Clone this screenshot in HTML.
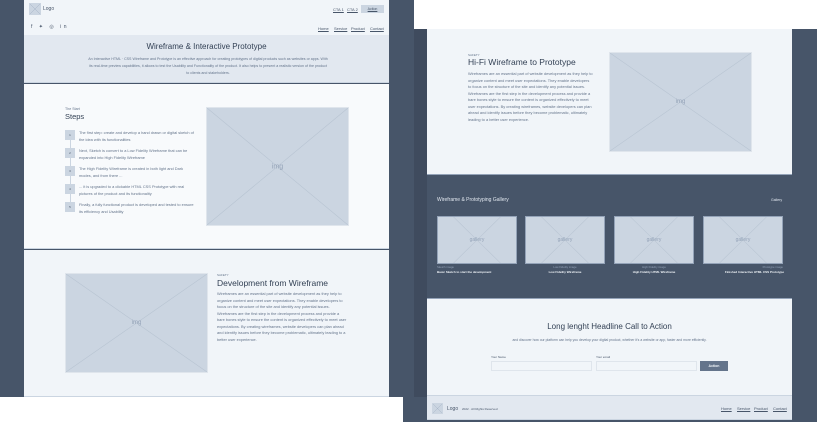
<!DOCTYPE html>
<html><head><meta charset="utf-8"><style>
*{margin:0;padding:0;box-sizing:border-box}
body{width:817px;height:422px;background:#475569;position:relative;overflow:hidden;font-family:"Liberation Sans",sans-serif;color:#475569}
.a{position:absolute}
.ph{position:absolute;background:#cbd5e1;border:1px solid #dfe5ec;overflow:hidden}
.ph svg{position:absolute;left:0;top:0;width:100%;height:100%}
.ph span{position:absolute;left:0;right:0;top:50%;transform:translateY(-50%);text-align:center;color:#94a3b8;background:transparent}
.t{position:absolute;white-space:nowrap}
.p{position:absolute;font-size:3.9px;line-height:6.5px;color:#64748b}
u{text-decoration:underline}
.nav{font-size:4px;color:#475569}
</style></head><body>
<!-- left panel -->
<div class="a" style="left:24px;top:0;width:365px;height:35px;background:#f1f5f9"></div>
<div class="a" style="left:24px;top:35px;width:365px;height:48px;background:#e2e8f0;border-bottom:1px solid #cbd5e1"></div>
<div class="a" style="left:24px;top:84px;width:365px;height:165px;background:#f8fafc;border-bottom:1px solid #cbd5e1"></div>
<div class="a" style="left:24px;top:250px;width:365px;height:147px;background:#f1f5f9;border-bottom:1px solid #cbd5e1"></div>
<div class="a" style="left:0;top:397px;width:403px;height:25px;background:#fff"></div>
<div class="a" style="left:403px;top:397px;width:11px;height:25px;background:#475569"></div>
<div class="ph" style="left:29px;top:3px;width:12px;height:12px;border-color:#cbd5e1"><svg viewBox="0 0 12 12" preserveAspectRatio="none"><path d="M0 0L12 12M12 0L0 12" stroke="#94a3b8" stroke-width=".4"/></svg></div>
<div class="t" style="left:43px;top:6px;font-size:5px">Logo</div>
<div class="t nav" style="left:333px;top:7px"><u>CTA 1</u></div>
<div class="t nav" style="left:347px;top:7px"><u>CTA 2</u></div>
<div class="a" style="left:361px;top:5px;width:23px;height:8px;background:#cbd5e1;font-size:3.5px;text-align:center;line-height:8px"><u>Action</u></div>
<div class="t" style="left:31px;top:24px;font-size:5px;color:#475569;letter-spacing:2.5px">f ✦ ◎ in</div>
<div class="t nav" style="left:318px;top:26px"><u>Home</u></div>
<div class="t nav" style="left:334px;top:26px"><u>Service</u></div>
<div class="t nav" style="left:351px;top:26px"><u>Product</u></div>
<div class="t nav" style="left:370px;top:26px"><u>Contact</u></div>
<div class="t" style="left:24px;width:365px;top:42px;text-align:center;font-size:8px;color:#334155">Wireframe &amp; Interactive Prototype</div>
<div class="p" style="left:88px;width:240px;top:56px;text-align:center;font-size:3.6px;line-height:7px">An Interactive HTML · CSS Wireframe and Prototype is an effective approach for creating prototypes of digital products such as websites or apps. With its real-time preview capabilities, it allows to test the Usability and Functionality of the product. It also helps to present a realistic version of the product to clients and stakeholders.</div>
<div class="t" style="left:65px;top:107px;font-size:3.6px;color:#64748b">The Start</div>
<div class="t" style="left:65px;top:112px;font-size:7.5px;color:#334155">Steps</div>
<div class="a" style="left:70px;top:135px;width:1px;height:72px;background:#cbd5e1"></div>
<div class="a" style="left:65px;top:130px;width:10px;height:10px;background:#cbd5e1;font-size:3px;text-align:center;line-height:10px">1</div>
<div class="a" style="left:65px;top:148px;width:10px;height:10px;background:#cbd5e1;font-size:3px;text-align:center;line-height:10px">2</div>
<div class="a" style="left:65px;top:166px;width:10px;height:10px;background:#cbd5e1;font-size:3px;text-align:center;line-height:10px">3</div>
<div class="a" style="left:65px;top:184px;width:10px;height:10px;background:#cbd5e1;font-size:3px;text-align:center;line-height:10px">4</div>
<div class="a" style="left:65px;top:202px;width:10px;height:10px;background:#cbd5e1;font-size:3px;text-align:center;line-height:10px">5</div>
<div class="p" style="left:79px;top:130px;width:117px">The first step: create and develop a hand drawn or digital sketch of the idea with its functionalities</div>
<div class="p" style="left:79px;top:148px;width:117px">Next, Sketch is convert to a Low Fidelity Wireframe that can be expanded into High Fidelity Wireframe</div>
<div class="p" style="left:79px;top:166px;width:117px">The High Fidelity Wireframe is created in both light and Dark modes, and from there ...</div>
<div class="p" style="left:79px;top:184px;width:117px">... it is upgraded to a clickable HTML CSS Prototype with real pictures of the product and its functionality</div>
<div class="p" style="left:79px;top:202px;width:117px">Finally, a fully functional product is developed and tested to ensure its efficiency and Usability</div>
<div class="ph" style="left:206px;top:107px;width:143px;height:119px"><svg viewBox="0 0 10 10" preserveAspectRatio="none"><path d="M0 0L10 10M10 0L0 10" stroke="#b8c4d2" stroke-width=".05"/></svg><span style="font-size:7px;background:none">img</span></div>
<div class="ph" style="left:65px;top:273px;width:143px;height:100px"><svg viewBox="0 0 10 10" preserveAspectRatio="none"><path d="M0 0L10 10M10 0L0 10" stroke="#b8c4d2" stroke-width=".05"/></svg><span style="font-size:6px">img</span></div>
<div class="t" style="left:217px;top:273px;font-size:3px;color:#64748b">SAFETY</div>
<div class="t" style="left:217px;top:278px;font-size:8.5px;color:#334155">Development from Wireframe</div>
<div class="p" style="left:217px;top:291px;width:130px">Wireframes are an essential part of website development as they help to organize content and meet user expectations. They enable developers to focus on the structure of the site and identify any potential issues. Wireframes are the first step in the development process and provide a bare bones style to ensure the content is organized effectively to meet user expectations. By creating wireframes, website developers can plan ahead and identify issues before they become problematic, ultimately leading to a better user experience.</div>

<!-- right side -->
<div class="a" style="left:414px;top:0;width:403px;height:29px;background:#fff"></div>
<div class="a" style="left:414px;top:29px;width:13px;height:368px;background:#3f4b5e"></div>
<div class="a" style="left:427px;top:29px;width:365px;height:146px;background:#f1f5f9;border-bottom:1px solid #94a3b8"></div>
<div class="a" style="left:427px;top:298px;width:365px;height:97px;background:#f1f5f9;border-top:1px solid #94a3b8"></div>
<div class="a" style="left:427px;top:395px;width:365px;height:25px;background:#e2e8f0;border-top:1px solid #cbd5e1;border-bottom:1px solid #cbd5e1"></div>
<div class="t" style="left:468px;top:53px;font-size:3px;color:#64748b">SAFETY</div>
<div class="t" style="left:468px;top:57px;font-size:8.5px;color:#334155">Hi-Fi Wireframe to Prototype</div>
<div class="p" style="left:468px;top:71px;width:125px">Wireframes are an essential part of website development as they help to organize content and meet user expectations. They enable developers to focus on the structure of the site and identify any potential issues. Wireframes are the first step in the development process and provide a bare bones style to ensure the content is organized effectively to meet user expectations. By creating wireframes, website developers can plan ahead and identify issues before they become problematic, ultimately leading to a better user experience.</div>
<div class="ph" style="left:609px;top:52px;width:143px;height:100px"><svg viewBox="0 0 10 10" preserveAspectRatio="none"><path d="M0 0L10 10M10 0L0 10" stroke="#b8c4d2" stroke-width=".05"/></svg><span style="font-size:6px">img</span></div>
<div class="t" style="left:437px;top:197px;font-size:5px;color:#e2e8f0">Wireframe &amp; Prototyping Gallery</div>
<div class="t" style="left:771px;top:198px;font-size:3.5px;color:#e2e8f0">Gallery</div>
<div class="ph" style="left:437px;top:216px;width:80px;height:48px;border-color:#94a3b8"><svg viewBox="0 0 10 10" preserveAspectRatio="none"><path d="M2 0L8 10M8 0L2 10" stroke="#b8c4d2" stroke-width=".08"/></svg><span style="font-size:5px">gallery</span></div>
<div class="ph" style="left:525px;top:216px;width:80px;height:48px;border-color:#94a3b8"><svg viewBox="0 0 10 10" preserveAspectRatio="none"><path d="M2 0L8 10M8 0L2 10" stroke="#b8c4d2" stroke-width=".08"/></svg><span style="font-size:5px">gallery</span></div>
<div class="ph" style="left:614px;top:216px;width:80px;height:48px;border-color:#94a3b8"><svg viewBox="0 0 10 10" preserveAspectRatio="none"><path d="M2 0L8 10M8 0L2 10" stroke="#b8c4d2" stroke-width=".08"/></svg><span style="font-size:5px">gallery</span></div>
<div class="ph" style="left:703px;top:216px;width:80px;height:48px;border-color:#94a3b8"><svg viewBox="0 0 10 10" preserveAspectRatio="none"><path d="M2 0L8 10M8 0L2 10" stroke="#b8c4d2" stroke-width=".08"/></svg><span style="font-size:5px">gallery</span></div>
<div class="t" style="left:437px;top:265px;font-size:2.8px;color:#94a3b8">Sketch image</div>
<div class="t" style="left:437px;top:270px;font-size:3px;color:#f1f5f9;font-weight:bold">Basic Sketch to start the development</div>
<div class="t" style="left:525px;width:80px;text-align:center;top:265px;font-size:2.8px;color:#94a3b8">Low Fidelity image</div>
<div class="t" style="left:525px;width:80px;text-align:center;top:270px;font-size:3px;color:#f1f5f9;font-weight:bold">Low Fidelity Wireframe</div>
<div class="t" style="left:614px;width:80px;text-align:center;top:265px;font-size:2.8px;color:#94a3b8">High Fidelity image</div>
<div class="t" style="left:614px;width:80px;text-align:center;top:270px;font-size:3px;color:#f1f5f9;font-weight:bold">High Fidelity HTML Wireframe</div>
<div class="t" style="left:703px;width:80px;text-align:right;top:265px;font-size:2.8px;color:#94a3b8">Prototype image</div>
<div class="t" style="left:703px;width:81px;text-align:right;top:270px;font-size:3px;color:#f1f5f9;font-weight:bold">Finished Interactive HTML CSS Prototype</div>
<div class="t" style="left:427px;width:365px;top:322px;text-align:center;font-size:8px;color:#334155">Long lenght Headline Call to Action</div>
<div class="t" style="left:427px;width:365px;top:338px;text-align:center;font-size:3.4px;color:#64748b">and discover how our platform can help you develop your digital product, whether it's a website or app, faster and more efficiently.</div>
<div class="t" style="left:491px;top:355px;font-size:3px;color:#475569">Your Name</div>
<div class="t" style="left:596px;top:355px;font-size:3px;color:#475569">Your email</div>
<div class="a" style="left:491px;top:361px;width:101px;height:10px;border:1px solid #dfe5ec;background:#f1f5f9"></div>
<div class="a" style="left:596px;top:361px;width:101px;height:10px;border:1px solid #dfe5ec;background:#f1f5f9"></div>
<div class="a" style="left:700px;top:361px;width:28px;height:10px;background:#64748b;color:#f1f5f9;font-size:3.5px;text-align:center;line-height:10px;font-weight:bold">Action</div>
<div class="ph" style="left:432px;top:403px;width:11px;height:11px;border-color:#cbd5e1"><svg viewBox="0 0 12 12" preserveAspectRatio="none"><path d="M0 0L12 12M12 0L0 12" stroke="#94a3b8" stroke-width=".4"/></svg></div>
<div class="t" style="left:447px;top:406px;font-size:5px">Logo</div>
<div class="t" style="left:462px;top:407px;font-size:3px;color:#475569">2022 · All Rights Reserved</div>
<div class="t nav" style="left:721px;top:406px"><u>Home</u></div>
<div class="t nav" style="left:737px;top:406px"><u>Service</u></div>
<div class="t nav" style="left:754px;top:406px"><u>Product</u></div>
<div class="t nav" style="left:773px;top:406px"><u>Contact</u></div>
</body></html>
